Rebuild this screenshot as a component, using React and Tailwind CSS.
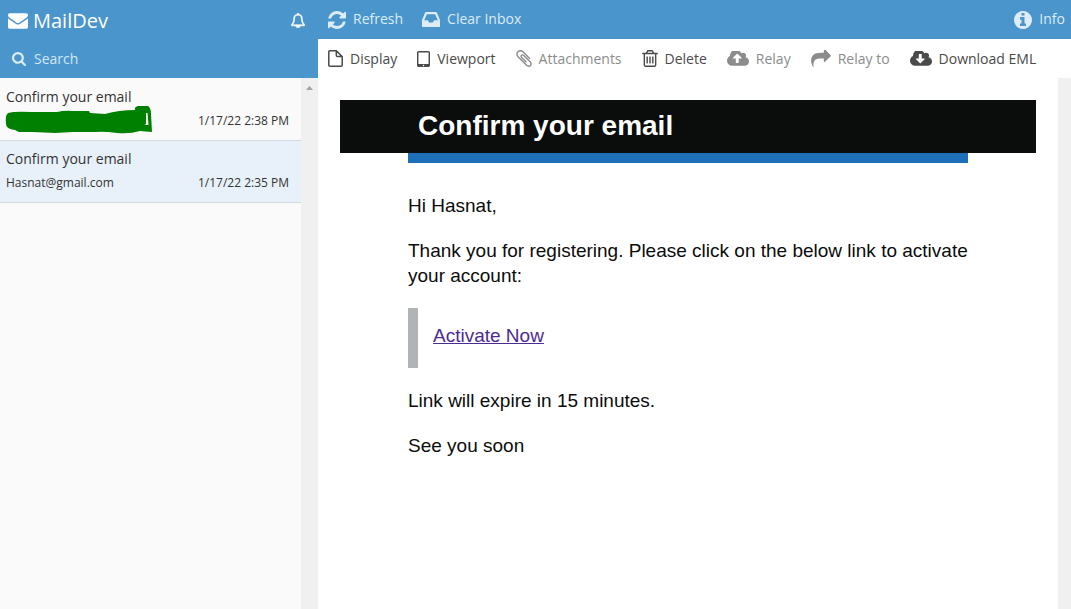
const ICONS = {
  envelope: { box: '0 256 1792 1408', d: 'M1792 710v794q0 66-47 113t-113 47h-1472q-66 0-113-47t-47-113v-794q44 49 101 87 362 246 497 345 57 42 92.5 65.5t94.5 48 110 24.5h2q51 0 110-24.5t94.5-48 92.5-65.5q170-123 498-345 57-39 100-87zm0-294q0 79-49 151t-122 123q-376 261-468 325-10 7-42.5 31t-54 38.5-52 32.5-57.5 27-50 9h-2q-23 0-50-9t-57.5-27-52-32.5-54-38.5-42.5-31q-91-64-262-182.5t-205-142.5q-62-42-117-115.5t-55-136.5q0-78 41.5-130t118.5-52h1472q65 0 112.5 47t47.5 113z' },
  bell: { box: '64 0 1664 1792', stroke: 70, d: 'M912 1696q0-16-16-16-59 0-101.5-42.5t-42.5-101.5q0-16-16-16t-16 16q0 73 51.5 124.5t124.5 51.5q16 0 16-16zm-666-288h1300q-266-300-266-832 0-51-24-105t-69-103-121.5-80.5-169.5-31.5-169.5 31.5-121.5 80.5-69 103-24 105q0 532-266 832zm1482 0q0 52-38 90t-90 38h-448q0 106-75 181t-181 75-181-75-75-181h-448q-52 0-90-38t-38-90q50-42 91-88t85-119.5 74.5-158.5 50-206 19.5-260q0-152 117-282.5t307-158.5q-8-19-8-39 0-40 28-68t68-28 68 28 28 68q0 20-8 39 190 28 307 158.5t117 282.5q0 139 19.5 260t50 206 74.5 158.5 85 119.5 91 88z' },
  search: { box: '64 128 1664 1664', d: 'M1216 832q0-185-131.5-316.5t-316.5-131.5-316.5 131.5-131.5 316.5 131.5 316.5 316.5 131.5 316.5-131.5 131.5-316.5zm512 832q0 52-38 90t-90 38q-54 0-90-38l-343-342q-179 124-399 124-143 0-273.5-55.5t-225-150-150-225-55.5-273.5 55.5-273.5 150-225 225-150 273.5-55.5 273.5 55.5 225 150 150 225 55.5 273.5q0 220-124 399l343 343q37 37 37 90z' },
  refresh: { box: '128 128 1536 1536', d: 'M1639 1056q0 5-1 7-64 268-268 434.5t-478 166.5q-146 0-282.5-55t-243.5-157l-129 129q-19 19-45 19t-45-19-19-45v-448q0-26 19-45t45-19h448q26 0 45 19t19 45-19 45l-137 137q71 66 161 102t187 36q134 0 250-65t186-179q11-17 53-117 8-23 30-23h192q13 0 22.5 9.5t9.5 22.5zm25-800v448q0 26-19 45t-45 19h-448q-26 0-45-19t-19-45 19-45l138-138q-148-137-349-137-134 0-250 65t-186 179q-11 17-53 117-8 23-30 23h-199q-13 0-22.5-9.5t-9.5-22.5v-7q65-268 270-434.5t480-166.5q146 0 284 55.5t245 156.5l130-129q19-19 45-19t45 19 19 45z' },
  inbox: { box: '0 256 1536 1280', d: 'M1023 960h316q-1-3-2.5-8t-2.5-8l-212-496h-708l-212 496q-1 2-2.5 8t-2.5 8h316l95 192h320zm513 30v482q0 26-19 45t-45 19h-1408q-26 0-45-19t-19-45v-482q0-62 25-123l238-552q10-25 36.5-42t52.5-17h832q26 0 52.5 17t36.5 42l238 552q25 61 25 123z' },
  info: { box: '128 128 1536 1536', d: 'M1152 1376v-160q0-14-9-23t-23-9h-96v-512q0-14-9-23t-23-9h-320q-14 0-23 9t-9 23v160q0 14 9 23t23 9h96v320h-96q-14 0-23 9t-9 23v160q0 14 9 23t23 9h448q14 0 23-9t9-23zm-128-896v-160q0-14-9-23t-23-9h-192q-14 0-23 9t-9 23v160q0 14 9 23t23 9h192q14 0 23-9t9-23zm640 416q0 209-103 385.5t-279.5 279.5-385.5 103-385.5-103-279.5-279.5-103-385.5 103-385.5 279.5-279.5 385.5-103 385.5 103 279.5 279.5 103 385.5z' },
  file: { box: '0 0 15 17', outline: 1.5, d: 'M8.300 0.800H1.800Q0.800 0.800 0.800 1.800V15.200Q0.800 16.200 1.800 16.200H13.200Q14.200 16.200 14.200 15.200V6.600ZM8.300 0.800V5.600Q8.300 6.600 9.300 6.600H14.200' },
  tablet: { box: '320 128 1152 1408', d: 'M960 1408q0-26-19-45t-45-19-45 19-19 45 19 45 45 19 45-19 19-45zm384-160v-960q0-13-9.5-22.5t-22.5-9.5h-832q-13 0-22.5 9.5t-9.5 22.5v960q0 13 9.5 22.5t22.5 9.5h832q13 0 22.5-9.5t9.5-22.5zm128-960v1088q0 66-47 113t-113 47h-832q-66 0-113-47t-47-113v-1088q0-66 47-113t113-47h832q66 0 113 47t47 113z' },
  clip: { box: '196 128 1400 1536', d: 'M1596 1385q0 117-79 196t-196 79q-135 0-235-100l-777-776q-113-115-113-271 0-159 110-270t269-111q158 0 273 113l605 606q10 10 10 22 0 16-30.5 46.5t-46.5 30.5q-13 0-23-10l-606-607q-79-77-181-77-106 0-179 75t-73 181q0 105 76 181l776 777q63 63 145 63 64 0 106-42t42-106q0-82-63-145l-581-581q-26-24-60-24-29 0-48 19t-19 48q0 32 25 59l410 410q10 10 10 22 0 16-31 47t-47 31q-12 0-22-10l-410-410q-63-61-63-149 0-82 57-139t139-57q88 0 149 63l581 581q100 98 100 235z' },
  trash: { box: '192 128 1408 1536', d: 'M704 736v576q0 14-9 23t-23 9h-64q-14 0-23-9t-9-23v-576q0-14 9-23t23-9h64q14 0 23 9t9 23zm256 0v576q0 14-9 23t-23 9h-64q-14 0-23-9t-9-23v-576q0-14 9-23t23-9h64q14 0 23 9t9 23zm256 0v576q0 14-9 23t-23 9h-64q-14 0-23-9t-9-23v-576q0-14 9-23t23-9h64q14 0 23 9t9 23zm128 724v-948h-896v948q0 22 7 40.5t14.5 27 10.5 8.5h832q3 0 10.5-8.5t14.5-27 7-40.5zm-672-1076h448l-48-117q-7-9-17-11h-317q-10 2-17 11zm928 32v64q0 14-9 23t-23 9h-96v948q0 83-47 143.5t-113 60.5h-832q-66 0-113-58.5t-47-141.5v-952h-96q-14 0-23-9t-9-23v-64q0-14 9-23t23-9h309l70-167q15-37 54-63t79-26h320q40 0 79 26t54 63l70 167h309q14 0 23 9t9 23z' },
  upload: { box: '-64 256 1920 1280', d: 'M1216 864q0-14-9-23l-352-352q-9-9-23-9t-23 9l-351 351q-10 12-10 24 0 14 9 23t23 9h224v352q0 13 9.5 22.5t22.5 9.5h192q13 0 22.5-9.5t9.5-22.5v-352h224q13 0 22.5-9.5t9.5-22.5zm640 288q0 159-112.5 271.5t-271.5 112.5h-1088q-185 0-316.5-131.5t-131.5-316.5q0-130 70-240t188-165q-2-30-2-43 0-212 150-362t362-150q156 0 285.5 87t188.5 231q71-62 166-62 106 0 181 75t75 181q0 76-41 138 130 31 213.5 135.5t83.5 238.5z' },
  download: { box: '-64 256 1920 1280', d: 'M1216 928q0-14-9-23t-23-9h-224v-352q0-13-9.5-22.5t-22.5-9.5h-192q-13 0-22.5 9.5t-9.5 22.5v352h-224q-13 0-22.5 9.5t-9.5 22.5q0 14 9 23l352 352q9 9 23 9t23-9l351-351q10-12 10-24zm640 224q0 159-112.5 271.5t-271.5 112.5h-1088q-185 0-316.5-131.5t-131.5-316.5q0-130 70-240t188-165q-2-30-2-43 0-212 150-362t362-150q156 0 285.5 87t188.5 231q71-62 166-62 106 0 181 75t75 181q0 76-41 138 130 31 213.5 135.5t83.5 238.5z' },
  share: { box: '0 128 1792 1536', d: 'M1792 640q0 26-19 45l-512 512q-19 19-45 19t-45-19-19-45v-256h-224q-98 0-175.5 6t-154 21.5-133 42.5-105.5 69.5-80 101-48.5 138.5-17.5 181q0 55 5 123 0 6 2.5 23.5t2.5 26.5q0 15-8.5 25t-23.5 10q-16 0-28-17-7-9-13-22t-13.5-30-10.5-24q-127-285-127-451 0-199 53-333 162-403 875-403h224v-256q0-26 19-45t45-19 45 19l512 512q19 19 19 45z' },
};

function Icon({ name, className }) {
  const { box, d, stroke, outline } = ICONS[name];
  return (
    <svg viewBox={box} aria-hidden="true" className={`shrink-0 ${className}`}>
      <path
        d={d}
        fill={outline ? 'none' : 'currentColor'}
        stroke={outline || stroke ? 'currentColor' : 'none'}
        strokeWidth={outline || stroke}
      />
    </svg>
  );
}

function ToolButton({ icon, size, children, disabled }) {
  return (
    <button
      type="button"
      disabled={disabled}
      className={`flex items-center gap-[7px] whitespace-nowrap ${disabled ? 'text-[#8c8c8c]' : 'text-[#4a4a4a]'}`}
    >
      <Icon name={icon} className={size} />
      {children}
    </button>
  );
}

function HeaderButton({ icon, size, children }) {
  return (
    <button type="button" className="flex items-center gap-[7px] whitespace-nowrap text-[#dcecf8]">
      <Icon name={icon} className={size} />
      <span className="pb-0.5">{children}</span>
    </button>
  );
}

function MailRow({ subject, date, selected, children }) {
  return (
    <li className={`border-b border-[#cfdce6] ${selected ? 'bg-[#e8f1f9]' : ''}`}>
      <a href="#mail" className="block py-2 pr-3 pl-1.5">
        <span className="block text-sm leading-5">{subject}</span>
        <span className="mt-[3px] flex h-[22px] items-center justify-between text-xs">
          {children}
          <span>{date}</span>
        </span>
      </a>
    </li>
  );
}

function Scribble() {
  return (
    <svg viewBox="0 0 148 30" role="img" aria-label="Hidden address" className="-my-1 -ml-px h-[30px] w-[148px]">
      <path
        fill="#008000"
        d="M3 7Q10 5 26 6L52 6Q60 4 68 5L84 5L85 7L100 8Q114 4 130 4Q129 1 133 0L143 0Q146 2 146 8L147 26L135 25Q125 28 112 27Q98 25 90 26L68 26L50 27L28 26L14 26L10 24Q1 23 1 18Q0 9 3 7Z"
      />
      <path fill="#fff" d="M141 7L142.500 7L143.500 19L139.500 19L141 18Z" />
    </svg>
  );
}

export default function App() {
  return (
    <div className="flex min-h-screen bg-white font-['Open_Sans',sans-serif] text-sm text-[#333]">
      <aside className="flex w-[318px] shrink-0 flex-col">
        <div className="bg-[#4a95cb]">
          <div className="flex h-10 items-center justify-between pt-px pr-[13px] pl-2 text-white">
            <h1 className="flex items-center gap-[5px] text-xl">
              <Icon name="envelope" className="h-4 w-5" />
              MailDev
            </h1>
            <button type="button" aria-label="Notifications">
              <Icon name="bell" className="h-[15px] w-[14px]" />
            </button>
          </div>
          <label className="flex h-[38px] items-center gap-2 pl-3 text-[#dcecf8]">
            <Icon name="search" className="size-[14px]" />
            <input
              type="text"
              aria-label="Search"
              placeholder="Search"
              className="min-w-0 flex-1 bg-transparent outline-none placeholder:text-[#cfe8f8]"
            />
          </label>
        </div>
        <div className="flex flex-1">
          <ul className="flex-1 bg-[#fafafa] pt-px">
            <MailRow subject="Confirm your email" date="1/17/22 2:38 PM">
              <Scribble />
            </MailRow>
            <MailRow subject="Confirm your email" date="1/17/22 2:35 PM" selected>
              <span>Hasnat@gmail.com</span>
            </MailRow>
          </ul>
          <div className="flex w-[17px] justify-center bg-[#f0f0f0] pt-2">
            <svg viewBox="0 0 7 4" aria-hidden="true" className="h-1 w-[7px]">
              <path d="M0 4L3.500 0L7 4Z" fill="#a3a3a3" />
            </svg>
          </div>
        </div>
      </aside>

      <main className="flex min-w-0 flex-1 flex-col">
        <header className="flex h-[39px] items-center gap-[19px] bg-[#4a95cb] pr-1.5 pl-2.5">
          <HeaderButton icon="refresh" size="size-[18px]">Refresh</HeaderButton>
          <HeaderButton icon="inbox" size="h-[15px] w-[18px]">Clear Inbox</HeaderButton>
          <div className="ml-auto">
            <HeaderButton icon="info" size="size-[18px]">Info</HeaderButton>
          </div>
        </header>
        <nav aria-label="Message actions" className="flex h-[39px] items-center gap-5 pl-2.5">
          <ToolButton icon="file" size="h-[17px] w-[15px]">Display</ToolButton>
          <ToolButton icon="tablet" size="h-4 w-[13px]">Viewport</ToolButton>
          <ToolButton icon="clip" size="h-[17px] w-4" disabled>Attachments</ToolButton>
          <ToolButton icon="trash" size="h-[17px] w-4">Delete</ToolButton>
          <ToolButton icon="upload" size="h-[15px] w-[22px]" disabled>Relay</ToolButton>
          <ToolButton icon="share" size="h-[17px] w-5" disabled>Relay to</ToolButton>
          <ToolButton icon="download" size="h-[15px] w-[22px]">Download EML</ToolButton>
        </nav>
        <div className="flex flex-1">
          <article className="min-w-0 flex-1 px-[22px] pt-[22px] font-['Liberation_Sans',Arial,sans-serif] text-[19px] leading-[25px] text-[#0b0c0c]">
            <div className="bg-[#0b0c0c]">
              <h2 className="mx-auto max-w-[560px] px-2.5 pt-[9px] pb-[11px] text-[28px] leading-[33px] font-bold text-white">
                Confirm your email
              </h2>
            </div>
            <div className="mx-auto max-w-[560px]">
              <div className="h-2.5 bg-[#1d70b8]" />
              <p className="mt-[30px]">Hi Hasnat,</p>
              <p className="mt-5">
                Thank you for registering. Please click on the below link to activate your account:
              </p>
              <blockquote className="mt-5 border-l-[10px] border-[#b1b4b6] pt-[15px] pb-5 pl-[15px]">
                <a href="#activate" className="text-[#4c2c92] underline">Activate Now</a>
              </blockquote>
              <p className="mt-5">Link will expire in 15 minutes.</p>
              <p className="mt-5">See you soon</p>
            </div>
          </article>
          <div className="w-[13px] bg-[#f0f0f0]" />
        </div>
      </main>
    </div>
  );
}
